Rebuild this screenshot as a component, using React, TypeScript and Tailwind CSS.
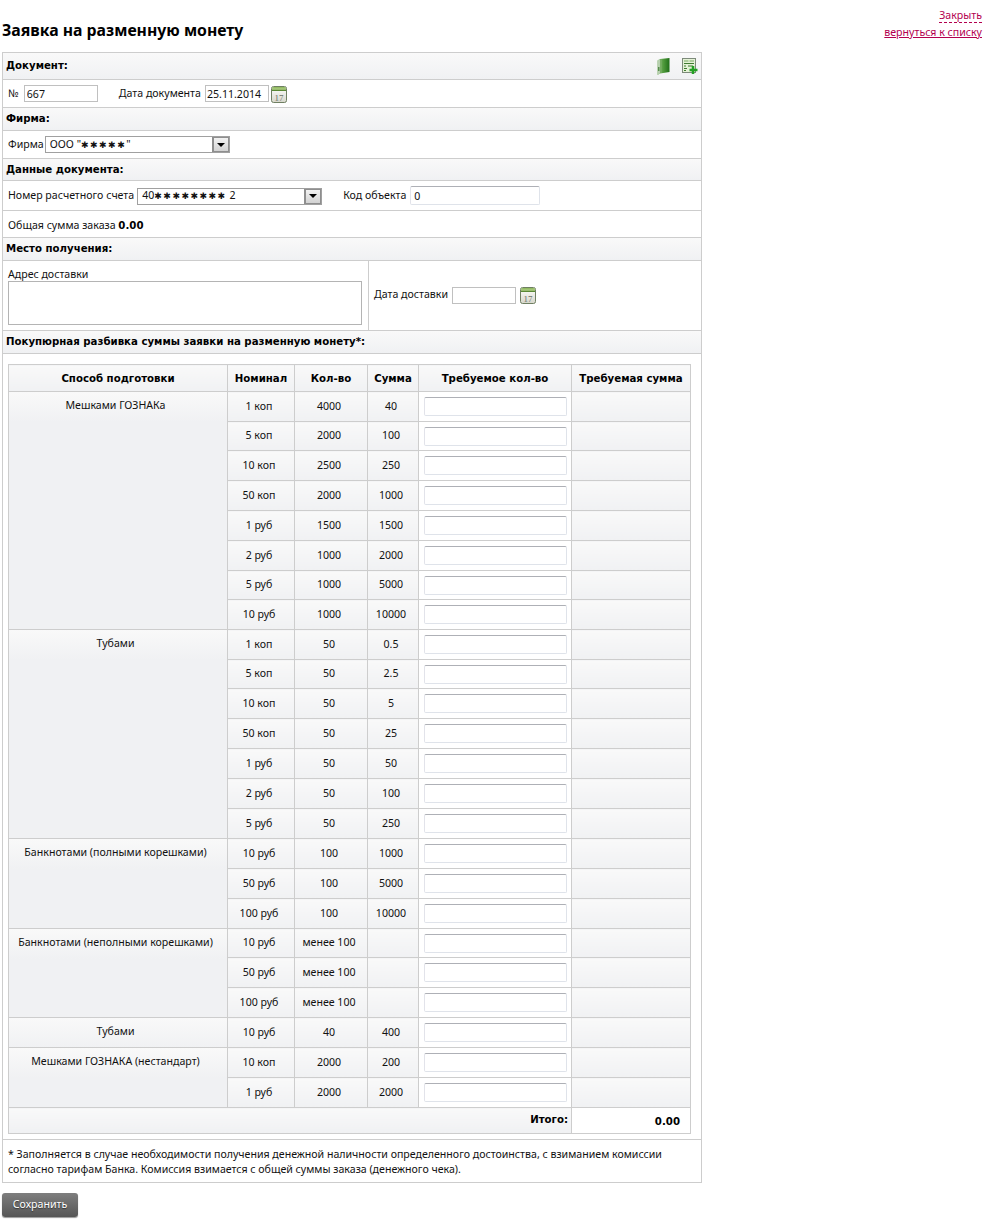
import React from "react";

const bold = "font-['DejaVu_Sans',sans-serif] font-bold text-[10.2px]";

type Row = { method?: string; span?: number; nom: string; qty: string; sum: string };

const rows: Row[] = [
  { method: "Мешками ГОЗНАКа", span: 8, nom: "1 коп", qty: "4000", sum: "40" },
  { nom: "5 коп", qty: "2000", sum: "100" },
  { nom: "10 коп", qty: "2500", sum: "250" },
  { nom: "50 коп", qty: "2000", sum: "1000" },
  { nom: "1 руб", qty: "1500", sum: "1500" },
  { nom: "2 руб", qty: "1000", sum: "2000" },
  { nom: "5 руб", qty: "1000", sum: "5000" },
  { nom: "10 руб", qty: "1000", sum: "10000" },
  { method: "Тубами", span: 7, nom: "1 коп", qty: "50", sum: "0.5" },
  { nom: "5 коп", qty: "50", sum: "2.5" },
  { nom: "10 коп", qty: "50", sum: "5" },
  { nom: "50 коп", qty: "50", sum: "25" },
  { nom: "1 руб", qty: "50", sum: "50" },
  { nom: "2 руб", qty: "50", sum: "100" },
  { nom: "5 руб", qty: "50", sum: "250" },
  { method: "Банкнотами (полными корешками)", span: 3, nom: "10 руб", qty: "100", sum: "1000" },
  { nom: "50 руб", qty: "100", sum: "5000" },
  { nom: "100 руб", qty: "100", sum: "10000" },
  { method: "Банкнотами (неполными корешками)", span: 3, nom: "10 руб", qty: "менее 100", sum: "" },
  { nom: "50 руб", qty: "менее 100", sum: "" },
  { nom: "100 руб", qty: "менее 100", sum: "" },
  { method: "Тубами", span: 1, nom: "10 руб", qty: "40", sum: "400" },
  { method: "Мешками ГОЗНАКА (нестандарт)", span: 2, nom: "10 коп", qty: "2000", sum: "200" },
  { nom: "1 руб", qty: "2000", sum: "2000" },
];

const shortRows = [1, 6, 9, 18];

const grad = "bg-[linear-gradient(#f9f9f9,#f0f1f3)]";
const cell = `border border-[#cdcdcd] ${grad} text-center align-middle p-0`;

function CalendarIcon() {
  return (
    <svg width="17" height="18" viewBox="0 0 17 18" className="shrink-0">
      <defs>
        <linearGradient id="calTop" x1="0" y1="0" x2="0" y2="1">
          <stop offset="0" stopColor="#9cc46a" />
          <stop offset="1" stopColor="#4f7f2c" />
        </linearGradient>
        <linearGradient id="calBody" x1="0" y1="0" x2="0" y2="1">
          <stop offset="0" stopColor="#ffffff" />
          <stop offset="1" stopColor="#d6d6ca" />
        </linearGradient>
      </defs>
      <rect x="0.5" y="0.5" width="15" height="16" rx="2" fill="url(#calBody)" stroke="#6f7f62" />
      <path d="M1 5V2.5A1.5 1.5 0 0 1 2.5 1h11A1.5 1.5 0 0 1 15 2.5V5Z" fill="url(#calTop)" />
      <path d="M1 3h14" stroke="#c6e09c" strokeWidth="1" />
      <text x="8" y="14.5" textAnchor="middle" fontSize="9" fill="#6b7166" fontFamily="'Liberation Serif',serif">17</text>
    </svg>
  );
}

function BinderIcon() {
  return (
    <svg width="13" height="17" viewBox="0 0 13 17">
      <defs>
        <linearGradient id="bind" x1="0" y1="0" x2="1" y2="0">
          <stop offset="0" stopColor="#8dbb78" />
          <stop offset="0.5" stopColor="#4f9a3c" />
          <stop offset="1" stopColor="#1f6f18" />
        </linearGradient>
      </defs>
      <path d="M3 1 12.500 0v14L3 15.500 .5 17V2.500Z" fill="url(#bind)" />
      <path d="M.5 2.500 3 1v14.500L.5 17Z" fill="#b6cfae" />
      <rect x="1.200" y="9" width="1.200" height="4" fill="#3f7a35" />
      <rect x="3.500" y="1.500" width="1" height="13.500" fill="#7fb46c" />
    </svg>
  );
}

function AddFormIcon() {
  return (
    <svg width="16" height="16" viewBox="0 0 16 16">
      <rect x="0.5" y="0.5" width="13" height="14" fill="#e4f2d6" stroke="#7d8a7a" />
      <path d="M2 3h4.500M7.500 3h4.500" stroke="#79a862" strokeWidth="1" />
      <path d="M2 5.500h10M2 8h2M6 8h5M2 10.500h3M2 12.500h2" stroke="#3f7a30" strokeWidth="1" />
      <path d="M11 8v8M7.500 12h8" stroke="#24a024" strokeWidth="2.500" />
    </svg>
  );
}

function Section({ children, h }: { children: React.ReactNode; h: string }) {
  return (
    <div className={`${h} ${grad} border-b border-[#cdcdcd] flex items-center pl-[3px] pr-[3px] ${bold} text-[#000]`}>
      {children}
    </div>
  );
}

function Stars({ n }: { n: number }) {
  return <span className="font-['DejaVu_Sans',sans-serif] text-[9px] tracking-[1.500px]">{"✱".repeat(n)}</span>;
}

function FakeSelect({ children, w }: { children: React.ReactNode; w: string }) {
  return (
    <div className={`${w} h-[17px] border border-[#a0a0a0] flex items-center justify-between bg-white pl-[4px] shrink-0`}>
      <span className="whitespace-nowrap leading-[15px]">{children}</span>
      <span className="w-[17px] h-[15px] bg-[linear-gradient(#f2f2f2,#d2d2d2)] border-2 border-[#8e8e8e] border-t border-r border-b flex items-center justify-center">
        <span className="w-0 h-0 border-x-[4px] border-x-transparent border-t-[4px] border-t-black" />
      </span>
    </div>
  );
}

const softInput =
  "border border-[#dfe3ea] border-t-[#aeb0b6] border-l-[#e2e3ea] rounded-[2px] bg-white outline-none";
const plainInput = "border border-[#c0c0c0] bg-white outline-none text-[#111]";

export default function App() {
  return (
    <div className="font-['Noto_Sans',sans-serif] text-[10.6px] text-[#111] w-[989px] min-h-[1223px] bg-white">
      <header className="h-[52px] flex justify-between pl-[2px] pr-[7px]">
        <h1 className="text-[15.800px] font-bold text-black mt-[20px] leading-[20px]">Заявка на разменную монету</h1>
        <div className="flex flex-col items-end pt-[8px] text-[#b3004f] text-[10.6px] leading-[16px]">
          <a className="border-b border-dashed border-[#b3004f] leading-[14px]">Закрыть</a>
          <a className="underline mt-[1px]">вернуться к списку</a>
        </div>
      </header>

      <div className="ml-[2px] w-[700px] border border-[#cdcdcd]">
        <div className={`h-[27px] ${grad} border-b border-[#cdcdcd] flex items-center justify-between pl-[3px] pr-[3px] ${bold} text-black`}>
          <span>Документ:</span>
          <span className="flex items-center gap-[12px]">
            <BinderIcon />
            <AddFormIcon />
          </span>
        </div>

        <div className="h-[28px] border-b border-[#cdcdcd] flex items-center pl-[5px]">
          <span>№</span>
          <input readOnly value="667" className={`${plainInput} ml-[5px] w-[74px] h-[17px] px-[2px] text-[10.6px]`} />
          <span className="ml-[21px]">Дата документа</span>
          <input readOnly value="25.11.2014" className={`${plainInput} ml-[4px] w-[64px] h-[17px] px-[1px] text-[10.6px]`} />
          <span className="ml-[2px] mt-[2px]"><CalendarIcon /></span>
        </div>

        <Section h="h-[23px]">Фирма:</Section>

        <div className="h-[28px] border-b border-[#cdcdcd] flex items-center pl-[5px]">
          <span>Фирма</span>
          <span className="ml-[1px]">
            <FakeSelect w="w-[185px]">ООО "<Stars n={5} />"</FakeSelect>
          </span>
        </div>

        <Section h="h-[22px]">Данные документа:</Section>

        <div className="h-[30px] border-b border-[#cdcdcd] flex items-center pl-[5px] pt-[1px]">
          <span>Номер расчетного счета</span>
          <span className="ml-[3px]">
            <FakeSelect w="w-[185px]">40<Stars n={8} /> 2</FakeSelect>
          </span>
          <span className="ml-[21px]">Код объекта</span>
          <input readOnly value="0" className={`${softInput} ml-[4px] mt-[-1px] w-[130px] h-[19px] px-[3px] text-[10.6px]`} />
        </div>

        <div className="h-[27px] border-b border-[#cdcdcd] flex items-center pl-[5px] pt-[4px]">
          <span>
            Общая сумма заказа <b className={`text-black ${bold}`}>0.00</b>
          </span>
        </div>

        <Section h="h-[23px]">Место получения:</Section>

        <div className="h-[70px] border-b border-[#cdcdcd] flex">
          <div className="w-[366px] border-r border-[#cdcdcd] pl-[5px] pt-[6px]">
            <div className="leading-[14px]">Адрес доставки</div>
            <textarea readOnly className="block w-[354px] h-[44px] border border-[#b4b4b4] resize-none outline-none" />
          </div>
          <div className="flex-1 flex items-center pl-[5px] pb-[1px]">
            <span>Дата доставки</span>
            <input readOnly className={`${plainInput} ml-[4px] w-[64px] h-[17px]`} />
            <span className="ml-[4px] mt-[2px]"><CalendarIcon /></span>
          </div>
        </div>

        <Section h="h-[23px]">Покупюрная разбивка суммы заявки на разменную монету*:</Section>

        <div className="h-[786px] border-b border-[#cdcdcd] pt-[10px] pl-[5px]">
          <table className="w-[682px] table-fixed border-collapse border border-[#cdcdcd]">
            <colgroup>
              <col className="w-[219px]" />
              <col className="w-[67px]" />
              <col className="w-[73px]" />
              <col className="w-[51px]" />
              <col className="w-[153px]" />
              <col className="w-[119px]" />
            </colgroup>
            <thead>
              <tr className={`h-[27px] text-black ${bold}`}>
                <th className={`${cell} pt-[1px]`}>Способ подготовки</th>
                <th className={`${cell} pt-[1px]`}>Номинал</th>
                <th className={`${cell} pt-[1px]`}>Кол-во</th>
                <th className={`${cell} pt-[1px]`}>Сумма</th>
                <th className={`${cell} pt-[1px]`}>Требуемое кол-во</th>
                <th className={`${cell} pt-[1px]`}>Требуемая сумма</th>
              </tr>
            </thead>
            <tbody>
              {rows.map((r, i) => (
                <tr key={i} className={shortRows.includes(i) ? "h-[29px]" : "h-[30px]"}>
                  {r.method && (
                    <td
                      rowSpan={r.span}
                      className="border border-[#cdcdcd] bg-[#f0f1f3] bg-[linear-gradient(#f9f9f9,#f0f1f3)] bg-no-repeat bg-[size:100%_30px] text-center align-top p-0 pt-[6px] pr-[5px]"
                    >
                      {r.method}
                    </td>
                  )}
                  <td className={`${cell} pr-[4px]`}>{r.nom}</td>
                  <td className={`${cell} pr-[4px]`}>{r.qty}</td>
                  <td className={`${cell} pr-[4px]`}>{r.sum}</td>
                  <td className="border border-[#cdcdcd] bg-white p-0 align-middle">
                    <input readOnly className={`${softInput} block mx-auto w-[143px] h-[19px]`} />
                  </td>
                  <td className={cell} />
                </tr>
              ))}
              <tr className="h-[26px]">
                <td colSpan={5} className={`border border-[#cdcdcd] ${grad} text-right align-top pt-[4px] pr-[3px] ${bold} text-black`}>
                  Итого:
                </td>
                <td className={`border border-[#cdcdcd] bg-white text-right pr-[10px] pt-[3px] ${bold} text-black`}>0.00</td>
              </tr>
            </tbody>
          </table>
        </div>

        <div className="h-[42px] pl-[5px] pr-[30px] pt-[7px] leading-[15px]">
          * Заполняется в случае необходимости получения денежной наличности определенного достоинства, с взиманием комиссии согласно тарифам Банка. Комиссия взимается с общей суммы заказа (денежного чека).
        </div>
      </div>

      <button className="block ml-[2px] mt-[10px] w-[76px] h-[24px] rounded-[3px] bg-[linear-gradient(#7e7e7e,#565656)] text-white text-[10.6px] [text-shadow:0_1px_1px_#333] shadow-[0_1px_1px_#999]">
        Сохранить
      </button>
    </div>
  );
}
